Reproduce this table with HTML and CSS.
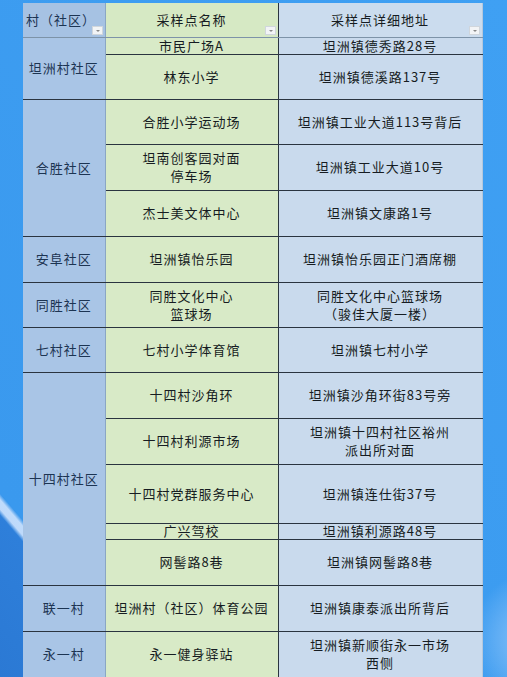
FILE: index.html
```html
<!DOCTYPE html>
<html lang="zh-CN">
<head>
<meta charset="utf-8">
<title>采样点</title>
<link rel="stylesheet" href="styles.css">
</head>
<body>
<div class="stage">
<table class="sheet">
  <colgroup><col class="c1"><col class="c2"><col class="c3"></colgroup>
  <tr class="h34 head">
    <td class="v hl">村（社区）<span class="dd"></span></td>
    <td class="n">采样点名称<span class="dd"></span></td>
    <td class="a">采样点详细地址<span class="dd"></span></td>
  </tr>
  <tr class="h17">
    <td class="v" rowspan="2">坦洲村社区</td>
    <td class="n tight">市民广场A</td>
    <td class="a tight">坦洲镇德秀路28号</td>
  </tr>
  <tr class="h45">
    <td class="n">林东小学</td>
    <td class="a">坦洲镇德溪路137号</td>
  </tr>
  <tr class="h45">
    <td class="v" rowspan="3">合胜社区</td>
    <td class="n">合胜小学运动场</td>
    <td class="a">坦洲镇工业大道113号背后</td>
  </tr>
  <tr class="h46">
    <td class="n">坦南创客园对面<br>停车场</td>
    <td class="a">坦洲镇工业大道10号</td>
  </tr>
  <tr class="h46">
    <td class="n">杰士美文体中心</td>
    <td class="a">坦洲镇文康路1号</td>
  </tr>
  <tr class="h46">
    <td class="v">安阜社区</td>
    <td class="n">坦洲镇怡乐园</td>
    <td class="a">坦洲镇怡乐园正门酒席棚</td>
  </tr>
  <tr class="h45">
    <td class="v">同胜社区</td>
    <td class="n">同胜文化中心<br>篮球场</td>
    <td class="a">同胜文化中心篮球场<br>（骏佳大厦一楼）</td>
  </tr>
  <tr class="h45">
    <td class="v">七村社区</td>
    <td class="n">七村小学体育馆</td>
    <td class="a">坦洲镇七村小学</td>
  </tr>
  <tr class="h46">
    <td class="v" rowspan="5">十四村社区</td>
    <td class="n">十四村沙角环</td>
    <td class="a">坦洲镇沙角环街83号旁</td>
  </tr>
  <tr class="h46">
    <td class="n">十四村利源市场</td>
    <td class="a">坦洲镇十四村社区裕州<br>派出所对面</td>
  </tr>
  <tr class="h59">
    <td class="n">十四村党群服务中心</td>
    <td class="a">坦洲镇连仕街37号</td>
  </tr>
  <tr class="h16">
    <td class="n tight">广兴驾校</td>
    <td class="a tight">坦洲镇利源路48号</td>
  </tr>
  <tr class="h46">
    <td class="n">网髻路8巷</td>
    <td class="a">坦洲镇网髻路8巷</td>
  </tr>
  <tr class="h46">
    <td class="v">联一村</td>
    <td class="n">坦洲村（社区）体育公园</td>
    <td class="a">坦洲镇康泰派出所背后</td>
  </tr>
  <tr class="h46">
    <td class="v">永一村</td>
    <td class="n">永一健身驿站</td>
    <td class="a">坦洲镇新顺街永一市场<br>西侧</td>
  </tr>
</table>
</div>
</body>
</html>
```
FILE: styles.css
```css
html, body {
  margin: 0;
  padding: 0;
}
body {
  width: 507px;
  height: 677px;
  overflow: hidden;
  background:
    radial-gradient(circle at 540px 640px, rgba(190,220,255,0.7) 0, rgba(190,220,255,0) 70px),
    linear-gradient(229.5deg, transparent 0, transparent 706px, rgba(215,232,255,0.85) 710px, rgba(215,232,255,0.85) 716px, transparent 720px),
    linear-gradient(229.5deg, #3fa0f3 0, #3a99ee 705px, #2e7fda 721px, #2b79d4 100%);
  font-family: "Noto Sans CJK SC", "Noto Sans", sans-serif;
}
.stage {
  padding: 3px 0 0 23px;
}
.sheet {
  border-collapse: collapse;
  table-layout: fixed;
  width: 459px;
  font-size: 13px;
  line-height: 18px;
  color: #161c22;
}
.c1 { width: 82px; }
.c2 { width: 173px; }
.c3 { width: 204px; }
.sheet td {
  padding: 0;
  text-align: center;
  vertical-align: middle;
  border-bottom: 1.5px solid #2a3440;
  letter-spacing: 1px;
  position: relative;
}
.sheet td.tight {
  line-height: 14px;
}
.v {
  background: #a9c5e6;
  color: #1c3452;
  border-right: 1px solid #8aa6c4;
}
.n {
  background: #d8eac7;
  border-right: 1.5px solid #2a3440;
}
.a {
  background: #c9daed;
  border-right: 1px solid #b6c8dc;
}
.head td {
  border-bottom: 1.5px solid #7d93a8;
}
.head .v { background: #a6c2e3; }
.head .n { background: #d6e9c4; }
.head .a { background: #cbdcee; }
.sheet td.hl {
  text-align: left;
  padding-left: 3px;
}
.dd {
  position: absolute;
  right: 2px;
  bottom: 2px;
  width: 11px;
  height: 9px;
  background: #f2f4f6;
  border: 1px solid #d0d6dc;
  box-sizing: border-box;
}
.dd::after {
  content: "";
  position: absolute;
  left: 3px;
  top: 3px;
  border-left: 2px solid transparent;
  border-right: 2px solid transparent;
  border-top: 2px solid #888;
}
.h34 { height: 34px; }
.h17 { height: 17px; }
.h16 { height: 16px; }
.h45 { height: 45px; }
.h46 { height: 46px; }
.h59 { height: 59px; }
```
